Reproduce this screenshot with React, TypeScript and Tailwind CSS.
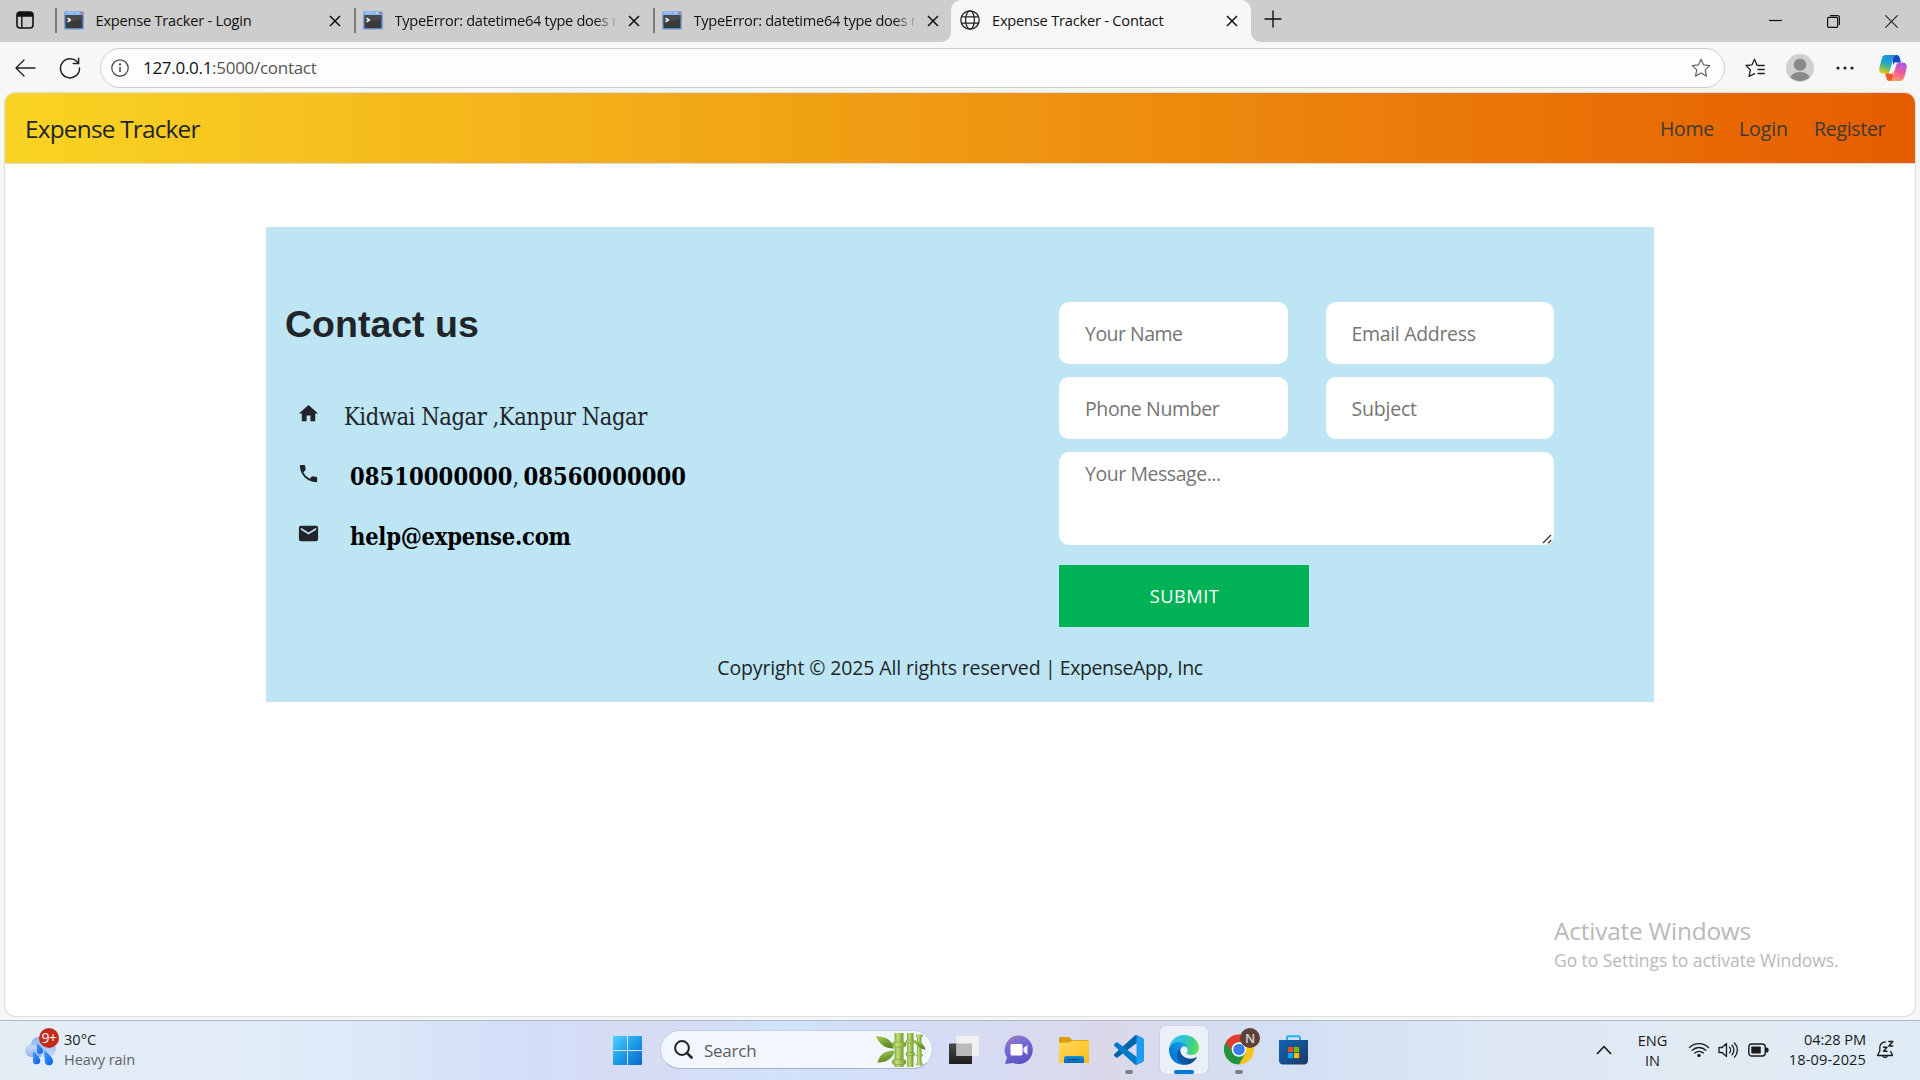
import type { ReactNode } from "react";
import { MdEmail, MdHome, MdPhone } from "react-icons/md";

function ConsoleIcon() {
  return (
    <svg width="20" height="19" viewBox="0 0 20 19" className="shrink-0">
      <rect x="0" y="0.5" width="20" height="18" rx="0.8" fill="#6f9fdf" />
      <rect x="0.5" y="0.5" width="19" height="3.5" fill="#86b4f0" />
      <rect x="3" y="1.5" width="7" height="1" fill="#a9cbf6" />
      <rect x="13.2" y="1.3" width="1.6" height="1.6" fill="#cfe0f7" />
      <rect x="16.6" y="1.1" width="2" height="2" fill="#e2574c" />
      <rect x="1.6" y="4.2" width="16.8" height="13" fill="#3b3b3b" />
      <path d="M1.6 4.2H18.4V8L1.6 12Z" fill="#4a4a4a" />
      <path d="M3.6 7.2L6.2 9L3.6 10.8" fill="none" stroke="#fff" strokeWidth="1.5" />
    </svg>
  );
}

function GlobeIcon() {
  return (
    <svg width="20" height="20" viewBox="0 0 20 20" fill="none" stroke="#222" strokeWidth="1.3" className="shrink-0">
      <circle cx="10" cy="10" r="9.2" />
      <ellipse cx="10" cy="10" rx="4.4" ry="9.2" />
      <path d="M1.6 6.8H18.4M1.6 13.2H18.4" />
    </svg>
  );
}

function CloseIcon() {
  return (
    <svg width="12" height="12" viewBox="0 0 12 12" stroke="#111" strokeWidth="1.5" className="shrink-0">
      <path d="M1 1L11 11M11 1L1 11" />
    </svg>
  );
}

function Tab({ title, fade = false, tracking }: { title: string; fade?: boolean; tracking: string }) {
  return (
    <div className="flex h-[42px] w-[299px] shrink-0 items-center">
      <div className="-mt-px h-[25px] w-[1.5px] bg-[#7a7a7a]" />
      <div className="-mt-0.5 ml-[7px] flex items-center">
        <ConsoleIcon />
        <div
          className={
            "-mt-px ml-[12px] w-[222px] whitespace-nowrap text-[14.6px] leading-5 text-[#111] " +
            tracking +
            (fade ? " [mask-image:linear-gradient(to_right,#000_200px,transparent_224px)]" : "")
          }
        >
          {title}
        </div>
        <div className="ml-[11px] mt-0.5">
          <CloseIcon />
        </div>
      </div>
    </div>
  );
}

function TabStrip() {
  return (
    <div className="flex h-[42px] bg-[#cdcdcd]">
      <div className="flex w-[55px] items-center pl-4">
        <svg width="18" height="18" viewBox="0 0 18 18" className="-mt-0.5">
          <rect x="1" y="1" width="16" height="16" rx="3" fill="none" stroke="#111" strokeWidth="1.6" />
          <path d="M1 4a3 3 0 0 1 3-3h10a3 3 0 0 1 3 3v1.8H1Z" fill="#111" />
          <path d="M5.8 5V17" stroke="#111" strokeWidth="1.4" />
        </svg>
      </div>
      <Tab title="Expense Tracker - Login" tracking="tracking-[-0.22px]" />
      <Tab title="TypeError: datetime64 type does n" fade tracking="tracking-[-0.29px]" />
      <Tab title="TypeError: datetime64 type does n" fade tracking="tracking-[-0.29px]" />
      <div className="relative -ml-px flex w-[300px] shrink-0 items-center rounded-t-[10px] bg-[#f7f7f7] pl-[9px] before:absolute before:bottom-0 before:-left-[10px] before:size-[10px] before:[background-image:radial-gradient(circle_at_0_0,#cdcdcd_9.5px,#f7f7f7_10.5px)] after:absolute after:bottom-0 after:-right-[10px] after:size-[10px] after:[background-image:radial-gradient(circle_at_100%_0,#cdcdcd_9.5px,#f7f7f7_10.5px)]">
        <div className="-mt-0.5 flex items-center">
          <GlobeIcon />
          <div className="-mt-px ml-[12px] w-[222px] whitespace-nowrap text-[14.6px] leading-5 tracking-[-0.2px] text-[#111]">
            Expense Tracker - Contact
          </div>
          <div className="ml-[12px] mt-0.5">
            <CloseIcon />
          </div>
        </div>
      </div>
      <div className="flex flex-1 items-center justify-between pl-[13px] pr-[22px]">
        <svg width="18" height="18" viewBox="0 0 18 18" stroke="#111" strokeWidth="1.4" className="-mt-1">
          <path d="M9 0.5V17.5M0.5 9H17.5" />
        </svg>
        <div className="flex items-center gap-[45px]">
          <svg width="13" height="13" viewBox="0 0 13 13" stroke="#111" strokeWidth="1.2" className="-mt-0.5">
            <path d="M0 6.5H13" />
          </svg>
          <svg width="13" height="13" viewBox="0 0 13 13" fill="none" stroke="#111" strokeWidth="1.2">
            <rect x="0.6" y="2.4" width="10" height="10" rx="1" />
            <path d="M3 0.7H10.4A2 2 0 0 1 12.4 2.7V10" />
          </svg>
          <svg width="13" height="13" viewBox="0 0 13 13" stroke="#222" strokeWidth="1.1">
            <path d="M0.3 0.3L12.7 12.7M12.7 0.3L0.3 12.7" />
          </svg>
        </div>
      </div>
    </div>
  );
}

function CopilotIcon() {
  return (
    <svg width="28" height="26" viewBox="0 0 28 26" className="shrink-0">
      <defs>
        <linearGradient id="cpA" x1="0.6" y1="0" x2="0.3" y2="1">
          <stop offset="0" stopColor="#1b8fe0" />
          <stop offset="0.45" stopColor="#22a5c9" />
          <stop offset="0.75" stopColor="#7fbf5a" />
          <stop offset="1" stopColor="#f3c614" />
        </linearGradient>
        <linearGradient id="cpB" x1="0.6" y1="0" x2="0.3" y2="1">
          <stop offset="0" stopColor="#a45be8" />
          <stop offset="0.5" stopColor="#f0589b" />
          <stop offset="1" stopColor="#ff9d5c" />
        </linearGradient>
      </defs>
      <path d="M14 0H17.5C20 0 20.5 2 21.3 4.8L22 7.5H17C15 7.5 14.5 9 14 10.5Z" fill="#1748c4" />
      <path d="M14 26H10.5C8 26 7.6 24 6.8 21L6 18.3H11C13 18.3 13.5 16.5 14.2 14.5Z" fill="#f0562c" />
      <path d="M7 0H17.5C15.2 0.4 14.6 2.6 13.8 5.5L10.8 16C10.2 18 8.6 18.6 6.8 18.6H4C0.8 18.6 -0.4 16 0.4 12.7L2.5 4.4C3.3 1.4 4.5 0 7 0Z" fill="url(#cpA)" />
      <path d="M21 26H10.5C12.8 25.6 13.4 23.4 14.2 20.5L17.2 10C17.8 8 19.4 7.4 21.2 7.4H24C27.2 7.4 28.4 10 27.6 13.3L25.5 21.6C24.7 24.6 23.5 26 21 26Z" fill="url(#cpB)" />
      <path d="M15.8 7.6H17.3C16.2 8.3 15.9 9.5 15.5 11L13.2 18.9H10C12 18.4 12.4 16.800 12.900 15Z" fill="#fff" />
    </svg>
  );
}

const STAR = "M10 1.2L12.6 6.9L18.8 7.6L14.2 11.9L15.5 18.1L10 15L4.5 18.1L5.8 11.9L1.2 7.6L7.4 6.9Z";

function Toolbar() {
  return (
    <div className="flex h-[51px] items-center bg-[#f7f7f7] pl-[15px] pr-[13px]">
      <svg width="21" height="18" viewBox="0 0 21 18" fill="none" stroke="#222" strokeWidth="1.4" strokeLinecap="round" strokeLinejoin="round">
        <path d="M20 9H1M9 1L1 9L9 17" />
      </svg>
      <svg width="22" height="22" viewBox="0 0 22 22" fill="none" stroke="#222" strokeWidth="1.5" strokeLinecap="round" className="ml-[23px]">
        <path d="M19 6.2A9.5 9.5 0 1 0 20.5 11" />
        <path d="M19.6 1.2V6.5H14.3" />
      </svg>
      <div className="ml-[19px] flex h-10 w-[1625px] items-center rounded-full border border-[#cfcfcf] bg-[#fdfdfd] pl-[10px] pr-[13px]">
        <svg width="18" height="18" viewBox="0 0 18 18" fill="none" stroke="#444" strokeWidth="1.2">
          <circle cx="9" cy="9" r="8.2" />
          <path d="M9 8V13" strokeWidth="1.5" />
          <circle cx="9" cy="5.4" r="0.5" fill="#444" />
        </svg>
        <div className="ml-[14px] flex-1 text-[17px] leading-6 tracking-[-0.29px] text-[#555]">
          <span className="text-[#111]">127.0.0.1</span>:5000/contact
        </div>
        <svg width="20" height="20" viewBox="0 0 20 20" fill="none" stroke="#6a6a6a" strokeWidth="1.3" strokeLinejoin="round">
          <path d={STAR} />
        </svg>
      </div>
      <svg width="20" height="20" viewBox="0 0 20 20" fill="none" stroke="#222" strokeWidth="1.3" strokeLinejoin="round" strokeLinecap="round" className="ml-[20px]">
        <path d="M11.5 7H12L9.5 1.2L7 6.8L1 7.5L5.4 11.9L4 18.3L9.5 15.6M13 7.5H19.3M13 11.5H19.3M13 15.5H19.3" />
      </svg>
      <svg width="28" height="28" viewBox="0 0 28 28" className="ml-[21px]">
        <defs>
          <clipPath id="av">
            <circle cx="14" cy="14" r="13" />
          </clipPath>
        </defs>
        <circle cx="14" cy="14" r="14" fill="#d2d0ce" />
        <circle cx="14" cy="10.6" r="6.2" fill="#8a8886" />
        <ellipse cx="14" cy="25.5" rx="10.5" ry="7.6" fill="#8a8886" clipPath="url(#av)" />
      </svg>
      <svg width="18" height="4" viewBox="0 0 18 4" fill="#222" className="ml-[22px]">
        <circle cx="2" cy="2" r="1.6" />
        <circle cx="9" cy="2" r="1.6" />
        <circle cx="16" cy="2" r="1.6" />
      </svg>
      <div className="ml-auto">
        <CopilotIcon />
      </div>
    </div>
  );
}

const field =
  "block w-full rounded-[10px] bg-white px-[26px] text-[19.5px] text-[#212529] outline-none placeholder:text-[#757575] placeholder:opacity-100 ";

function ContactForm() {
  return (
    <form className="w-[495px]">
      <div className="grid grid-cols-2 gap-x-[38px] gap-y-[13px]">
        <input className={field + "h-[62px] tracking-[-0.52px]"} placeholder="Your Name" />
        <input className={field + "h-[62px] tracking-[-0.32px]"} placeholder="Email Address" />
        <input className={field + "h-[62px] tracking-[-0.38px]"} placeholder="Phone Number" />
        <input className={field + "h-[62px] tracking-[-0.2px]"} placeholder="Subject" />
      </div>
      <div className="relative mt-[13px]">
        <textarea
          className={field + "h-[93px] resize-none pt-[7px] leading-[30px] tracking-[-0.45px]"}
          placeholder="Your Message..."
        />
        <svg width="10" height="10" viewBox="0 0 10 10" stroke="#444" strokeWidth="1.5" className="absolute bottom-px right-0.5">
          <path d="M1 9L9 1M6 9.200L9.200 6" />
        </svg>
      </div>
      <button type="button" className="mt-5 block h-[62px] w-[250px] bg-[#00b156] pl-px text-[18.3px] tracking-[0.45px] text-white">
        SUBMIT
      </button>
    </form>
  );
}

function ContactRow({ icon, children }: { icon: ReactNode; children: ReactNode }) {
  return (
    <div className="flex h-[60px] items-start pl-[12px] text-[#212529]">
      <div className="w-[47px]">{icon}</div>
      <div className="-mt-px whitespace-nowrap font-['DejaVu_Serif_Condensed','DejaVu_Serif',serif] text-[23.5px] leading-[32px]">
        {children}
      </div>
    </div>
  );
}

function Page() {
  return (
    <div className="flex h-[927px] flex-col bg-[#f7f7f7] px-[5px] pb-[4px]">
      <div className="flex-1 overflow-hidden rounded-[10px] bg-white shadow-[0_0_2px_rgba(0,0,0,0.35)]">
        <nav className="flex h-[70px] items-center justify-between pl-5 pr-[30px] pt-0.5 [background-image:linear-gradient(to_right,#f9d423,#e65c00)]">
          <div className="text-[24.4px] tracking-[-0.8px] text-[#212529]">Expense Tracker</div>
          <div className="flex text-[19.5px] text-[#3d3a31]">
            <span className="w-[79px] tracking-[-0.3px]">Home</span>
            <span className="w-[75px] tracking-[-0.1px]">Login</span>
            <span className="w-[71px] tracking-[-0.3px]">Register</span>
          </div>
        </nav>
        <div className="h-px bg-[#dcdcdc]" />
        <section className="mx-auto mt-[63px] h-[475px] w-[1388px] bg-[#bde5f3]">
          <div className="flex h-[400px] pt-[75px]">
            <div className="w-[793px] pl-[19px]">
              <h1 className="font-['Liberation_Sans',Arial,sans-serif] text-[37.5px] font-bold leading-[44px] text-[#212529]">
                Contact us
              </h1>
              <div className="mt-[56px]">
                <ContactRow icon={<MdHome size={23} />}>
                  <span className="tracking-[-0.44px]">Kidwai Nagar ,Kanpur Nagar</span>
                </ContactRow>
                <ContactRow icon={<MdPhone size={23} />}>
                  <span className="ml-[6px]">
                    <b className="tracking-[0.06px] text-black">08510000000</b>
                    <span className="tracking-[-1.2px]">, </span>
                    <b className="tracking-[0.06px] text-black">08560000000</b>
                  </span>
                </ContactRow>
                <ContactRow icon={<MdEmail size={23} />}>
                  <b className="ml-[6px] tracking-[-0.24px] text-black">help@expense.com</b>
                </ContactRow>
              </div>
            </div>
            <ContactForm />
          </div>
          <p className="pt-[26px] text-center text-[19.5px] leading-[30px] tracking-[-0.28px] text-[#212529]">
            <span className="tracking-[-0.13px]">Copyright © 2025 All rights reserved</span>
            <span className="tracking-[-0.5px]"> | </span>
            <span className="tracking-[-0.42px]">ExpenseApp, Inc</span>
          </p>
        </section>
      </div>
    </div>
  );
}

function WeatherIcon() {
  return (
    <svg width="36" height="38" viewBox="0 0 36 38" className="shrink-0">
      <defs>
        <linearGradient id="wc" x1="0" y1="0" x2="0" y2="1">
          <stop offset="0" stopColor="#8fb4f2" />
          <stop offset="1" stopColor="#c9dafa" />
        </linearGradient>
        <linearGradient id="wl" x1="0" y1="0" x2="0" y2="1">
          <stop offset="0" stopColor="#cddcf6" />
          <stop offset="1" stopColor="#94b0ea" />
        </linearGradient>
        <linearGradient id="wd" x1="0" y1="0" x2="1" y2="1">
          <stop offset="0" stopColor="#3fa0ff" />
          <stop offset="1" stopColor="#0a5fe8" />
        </linearGradient>
      </defs>
      <path d="M6.500 29A6.500 6.500 0 0 1 5.800 16.200A8.500 8.500 0 0 1 21.800 13.500A7 7 0 0 1 24.500 29Z" fill="url(#wc)" />
      <path d="M0 22.500A5.500 5.500 0 0 1 8 17.800A7 7 0 0 1 16 24.500V29H6.500A6.500 6.500 0 0 1 0 22.500Z" fill="url(#wl)" />
      <path d="M12 15.500C15 18 18 20.500 18 22.800A3.100 3.100 0 0 1 11.800 23Z" fill="url(#wd)" />
      <path d="M8 23C12 26.500 15.200 30 15.200 32.500A3.600 3.600 0 0 1 8 33Z" fill="url(#wd)" />
      <path d="M19 22C24 26 28 30 28 33A4 4 0 0 1 19.900 33.500Z" fill="url(#wd)" />
      <circle cx="24" cy="10" r="10" fill="#c42b1c" />
      <text x="24" y="15" textAnchor="middle" fontSize="14" fill="#fff" fontFamily="Open Sans, sans-serif" letterSpacing="-0.6">
        9+
      </text>
    </svg>
  );
}

function WindowsIcon() {
  return (
    <svg width="29" height="29" viewBox="0 0 29 29">
      <defs>
        <linearGradient id="wi" gradientUnits="userSpaceOnUse" x1="0" y1="0" x2="29" y2="29">
          <stop offset="0" stopColor="#50d3fc" />
          <stop offset="0.5" stopColor="#1c9be6" />
          <stop offset="1" stopColor="#0669cf" />
        </linearGradient>
      </defs>
      <path d="M1 0H14V14H0V1A1 1 0 0 1 1 0ZM15 0H28A1 1 0 0 1 29 1V14H15ZM0 15H14V29H1A1 1 0 0 1 0 28ZM15 15H29V28A1 1 0 0 1 28 29H15Z" fill="url(#wi)" />
    </svg>
  );
}

function BambooIcon() {
  return (
    <svg width="50" height="34" viewBox="0 0 50 34">
      <defs>
        <linearGradient id="bm" x1="0" y1="0" x2="1" y2="0">
          <stop offset="0" stopColor="#7fa838" />
          <stop offset="0.35" stopColor="#c2df78" />
          <stop offset="1" stopColor="#6f9a2e" />
        </linearGradient>
        <linearGradient id="bl" x1="0" y1="0" x2="0.4" y2="1">
          <stop offset="0" stopColor="#a9cf58" />
          <stop offset="1" stopColor="#5b8623" />
        </linearGradient>
      </defs>
      <path d="M0 3C7 3.500 16 5 17.500 15.500C9 15.500 3 11 0 3Z" fill="url(#bl)" />
      <path d="M1.500 29.500C4 20 11 17 18.500 18C17 26 9 30 1.500 29.500Z" fill="url(#bl)" />
      <rect x="18.500" y="0" width="9" height="34" fill="url(#bm)" />
      <rect x="16" y="9" width="14" height="5" rx="2.500" fill="url(#bm)" stroke="#6f9a2e" strokeWidth="0.500" />
      <rect x="16" y="26.500" width="14" height="5" rx="2.500" fill="url(#bm)" stroke="#6f9a2e" strokeWidth="0.500" />
      <rect x="31" y="0" width="6.500" height="34" fill="url(#bm)" />
      <rect x="29.800" y="7" width="9" height="3.200" rx="1.600" fill="url(#bm)" stroke="#6f9a2e" strokeWidth="0.500" />
      <rect x="29.800" y="19.500" width="9" height="3.200" rx="1.600" fill="url(#bm)" stroke="#6f9a2e" strokeWidth="0.500" />
      <rect x="41" y="2" width="4.500" height="30" fill="url(#bm)" />
      <rect x="39.800" y="1.500" width="7" height="2.600" rx="1.300" fill="url(#bm)" />
      <rect x="39.800" y="21" width="7" height="2.600" rx="1.300" fill="url(#bm)" />
      <rect x="39.800" y="30" width="7" height="2.600" rx="1.300" fill="url(#bm)" />
      <path d="M37.500 7C43 7.500 48.500 11 49.500 17C44 15.500 39 12 37.500 7Z" fill="url(#bl)" />
    </svg>
  );
}

function TaskViewIcon() {
  return (
    <svg width="30" height="30" viewBox="0 0 30 30">
      <defs>
        <linearGradient id="tv" x1="0" y1="0" x2="0" y2="1">
          <stop offset="0" stopColor="#4a4a4a" />
          <stop offset="1" stopColor="#1c1c1c" />
        </linearGradient>
      </defs>
      <rect x="0" y="8.500" width="23" height="20.500" rx="0.800" fill="url(#tv)" />
      <rect x="7.500" y="1" width="22.500" height="20" rx="0.800" fill="#f1f1f1" />
      <rect x="7.500" y="8.500" width="15.500" height="12.500" fill="#bbb" />
    </svg>
  );
}

function ChatIcon() {
  return (
    <svg width="30" height="30" viewBox="0 0 30 30">
      <defs>
        <linearGradient id="ch" x1="0.200" y1="0" x2="0.700" y2="1">
          <stop offset="0" stopColor="#a878b8" />
          <stop offset="0.300" stopColor="#7a6fd4" />
          <stop offset="1" stopColor="#5550c0" />
        </linearGradient>
      </defs>
      <path d="M15 0.500A14.300 14.300 0 1 1 9 28L1 29L3 22.600A14.300 14.300 0 0 1 15 0.500Z" fill="url(#ch)" />
      <rect x="6.500" y="9" width="12" height="11.500" rx="1.600" fill="#fff" />
      <path d="M19.500 13L23.500 10V20L19.500 16.800Z" fill="#f0eefe" />
    </svg>
  );
}

function FolderIcon() {
  return (
    <svg width="30" height="28" viewBox="0 0 30 28">
      <defs>
        <linearGradient id="fo" x1="0" y1="0" x2="1" y2="1">
          <stop offset="0" stopColor="#ffd95c" />
          <stop offset="1" stopColor="#fbbc1e" />
        </linearGradient>
        <linearGradient id="fb" x1="0" y1="0" x2="0" y2="1">
          <stop offset="0" stopColor="#1490df" />
          <stop offset="1" stopColor="#0668b6" />
        </linearGradient>
      </defs>
      <path d="M0 2.400A1.600 1.600 0 0 1 1.600 1H10L13 4H28.500A1.500 1.500 0 0 1 30 5.500V10H0Z" fill="#dc9a05" />
      <path d="M0 6.500H10.500L13 4.800H30V27H0Z" fill="url(#fo)" />
      <path d="M5 27V22.300A2.300 2.300 0 0 1 7.300 20H22.700A2.300 2.300 0 0 1 25 22.300V27Z" fill="url(#fb)" />
      <path d="M8.500 23.500H21.500" stroke="#0a4f92" strokeWidth="1.200" />
    </svg>
  );
}

function VSCodeIcon() {
  return (
    <svg width="30" height="30" viewBox="0 0 100 100">
      <path d="M96.5 10.8L75.9.9a6.2 6.2 0 0 0-7.1 1.2L1.3 63.6a4.2 4.2 0 0 0 0 6.2l5.5 5a4.2 4.2 0 0 0 5.3.2L93.4 13.4c2.7-2.1 6.6-.1 6.6 3.3v-.2a6.3 6.3 0 0 0-3.5-5.7Z" fill="#0065a9" />
      <path d="M96.5 89.2L75.9 99.1a6.2 6.2 0 0 1-7.1-1.2L1.3 36.4a4.2 4.2 0 0 1 0-6.2l5.5-5a4.2 4.2 0 0 1 5.3-.2l81.3 61.6c2.7 2.1 6.6.1 6.6-3.3v.2a6.3 6.3 0 0 1-3.5 5.7Z" fill="#007acc" />
      <path d="M75.9 99.1a6.2 6.2 0 0 1-7.1-1.2c2.3 2.3 6.2.7 6.2-2.6V4.7c0-3.3-3.9-4.9-6.2-2.6a6.2 6.2 0 0 1 7.1-1.2l20.6 9.900a6.300 6.300 0 0 1 3.500 5.600v67.200a6.300 6.300 0 0 1-3.500 5.600Z" fill="#1f9cf0" />
    </svg>
  );
}

function EdgeIcon() {
  return (
    <svg width="30" height="30" viewBox="0 0 256 256">
      <defs>
        <linearGradient id="e1" x1="0.25" y1="0.7" x2="0.95" y2="0.7">
          <stop offset="0" stopColor="#0c59a4" />
          <stop offset="1" stopColor="#114a8b" />
        </linearGradient>
        <linearGradient id="e2" x1="0.9" y1="0.3" x2="0.3" y2="0.95">
          <stop offset="0" stopColor="#1b9de2" />
          <stop offset="0.2" stopColor="#1595df" />
          <stop offset="0.7" stopColor="#0680d7" />
          <stop offset="1" stopColor="#0078d4" />
        </linearGradient>
        <linearGradient id="e3" x1="0" y1="0.4" x2="1" y2="0.6">
          <stop offset="0" stopColor="#35c1f1" />
          <stop offset="0.4" stopColor="#2cc3dc" />
          <stop offset="0.75" stopColor="#3fd089" />
          <stop offset="1" stopColor="#66e354" />
        </linearGradient>
      </defs>
      <path d="M231 190.5c-3.4 1.8-6.9 3.4-10.5 4.7a101.5 101.5 0 0 1-35.9 6.5c-47.3 0-88.5-32.5-88.5-74.3a31.5 31.5 0 0 1 16.4-27.3c-42.8 1.8-53.8 46.4-53.8 72.5 0 73.9 68.1 81.4 82.8 81.4 7.9 0 19.8-2.3 27-4.6l1.3-.4a128.3 128.3 0 0 0 66.6-52.8 4 4 0 0 0-5.4-5.7Z" fill="url(#e1)" />
      <path d="M105.7 241.4a79.2 79.2 0 0 1-22.7-21.3 80.7 80.7 0 0 1 29.5-120c3.2-1.5 8.5-4.1 15.6-4a32.4 32.4 0 0 1 25.7 13 31.9 31.9 0 0 1 6.3 18.7c0-.2 24.5-79.6-80-79.6-43.900 0-80 41.700-80 78.200a130.200 130.200 0 0 0 12.100 56 128 128 0 0 0 156.400 67.100 75.500 75.500 0 0 1-62.800-8Z" fill="url(#e2)" />
      <path d="M152.300 148.900c-.9 1-3.400 2.500-3.400 5.600 0 2.600 1.700 5.200 4.800 7.300 14.300 10 41.400 8.600 41.500 8.600a59.600 59.600 0 0 0 30.300-8.300 61.400 61.400 0 0 0 30.400-52.900c.3-22.400-8-37.300-11.300-43.900C223.500 23.900 177.700 0 128 0A128 128 0 0 0 0 126.200c.5-36.500 36.800-66 80-66 3.500 0 23.500.3 42 10.100 16.300 8.600 24.900 18.900 30.800 29.200 6.200 10.700 7.300 24.100 7.300 29.500 0 5.300-2.700 13.300-7.800 19.900Z" fill="url(#e3)" />
    </svg>
  );
}

function ChromeIcon() {
  return (
    <svg width="38" height="38" viewBox="0 0 38 38">
      <g transform="translate(0 6.5)">
        <circle cx="15" cy="15" r="15" fill="#fbc116" />
        <path d="M2 7.5A15 15 0 0 0 15 30L21.500 18.700L15 15V7.500Z" fill="#229342" />
        <path d="M2 7.500A15 15 0 0 1 28 7.500H15A7.500 7.500 0 0 0 8.500 18.800Z" fill="#e33b2e" />
        <circle cx="15" cy="15" r="7.300" fill="#fff" />
        <circle cx="15" cy="15" r="5.800" fill="#3b7ded" />
      </g>
      <circle cx="26" cy="10" r="10" fill="#5d4037" />
      <text x="26" y="15" textAnchor="middle" fontSize="13" fontWeight="600" fill="#ddd5d2" fontFamily="Open Sans, sans-serif">
        N
      </text>
    </svg>
  );
}

function StoreIcon() {
  return (
    <svg width="29" height="30" viewBox="0 0 29 30">
      <defs>
        <linearGradient id="st" x1="0" y1="0" x2="1" y2="1">
          <stop offset="0" stopColor="#0f65b5" />
          <stop offset="1" stopColor="#1d3a66" />
        </linearGradient>
      </defs>
      <path d="M8 7V2.5A1.2 1.2 0 0 1 9.2 1.3H19.8A1.2 1.2 0 0 1 21 2.5V7" fill="none" stroke="#21b5ee" strokeWidth="2" />
      <path d="M0 5H29V25A4 4 0 0 1 25 29.5H4A4 4 0 0 1 0 25Z" fill="url(#st)" />
      <rect x="9" y="12" width="5.2" height="5.2" fill="#f25022" />
      <rect x="15" y="12" width="5.2" height="5.2" fill="#7fba00" />
      <rect x="9" y="18" width="5.2" height="5.2" fill="#00a4ef" />
      <rect x="15" y="18" width="5.2" height="5.2" fill="#ffb900" />
    </svg>
  );
}

function AppSlot({ children, state }: { children: ReactNode; state?: "running" | "active" }) {
  return (
    <div
      className={
        "relative flex size-12 items-center justify-center rounded-[5px] " +
        (state === "active" ? "bg-[#ebeff9] shadow-[0_0_1px_rgba(80,90,120,0.5)]" : "")
      }
    >
      {children}
      {state === "running" && <span className="absolute bottom-0 h-1 w-2 rounded-full bg-[#7d8088]" />}
      {state === "active" && <span className="absolute bottom-0 h-1 w-5 rounded-full bg-[#0078d4]" />}
    </div>
  );
}

function Taskbar() {
  return (
    <div className="flex h-[60px] border-t border-[#b0b6c4] text-[#1b1b1b] [background-image:linear-gradient(to_right,#e3edf6_0px,#dfebf8_330px,#d2dff7_500px,#d6dcf4_650px,#d0e2fa_780px,#d6dcf4_960px,#dad9ea_1110px,#d3e0f4_1300px,#dee8f4_1520px,#e1ebf4_1700px,#deebf5_1920px)]">
      <div className="flex w-[613px] pl-[25px] pt-[7px]">
        <WeatherIcon />
        <div className="ml-[3px] pt-px text-[14.6px] leading-5">
          <div>30°C</div>
          <div className="tracking-[-0.12px] text-[#5f6368]">Heavy rain</div>
        </div>
      </div>
      <div className="pt-[15px]">
        <WindowsIcon />
      </div>
      <div className="ml-[18px] mt-[9px] flex h-[39px] w-[273px] items-center rounded-full border border-b-[#a9b2c8] border-[#c6d0e6] bg-[#f2f6fd] pl-[13px]">
        <svg width="19" height="19" viewBox="0 0 19 19" fill="none" stroke="#222" strokeWidth="2">
          <circle cx="8" cy="8" r="6.9" />
          <path d="M12.8 12.8L17.5 17.5" strokeWidth="2.6" strokeLinecap="round" />
        </svg>
        <div className="ml-[11px] mt-0.5 text-[17px] leading-6 tracking-[-0.25px] text-[#5b5e64]">Search</div>
        <div className="ml-auto mr-[6px]">
          <BambooIcon />
        </div>
      </div>
      <div className="ml-[7px] flex gap-[7px] pt-[5px]">
        <AppSlot><TaskViewIcon /></AppSlot>
        <AppSlot><ChatIcon /></AppSlot>
        <AppSlot><FolderIcon /></AppSlot>
        <AppSlot state="running"><VSCodeIcon /></AppSlot>
        <AppSlot state="active"><EdgeIcon /></AppSlot>
        <AppSlot state="running">
          <div className="-mt-[6px] ml-[8px]"><ChromeIcon /></div>
        </AppSlot>
        <AppSlot>
          <div className="mr-px"><StoreIcon /></div>
        </AppSlot>
      </div>
      <div className="ml-auto flex pr-[24px] text-[14.6px] leading-5">
        <svg width="16" height="10" viewBox="0 0 16 10" fill="none" stroke="#1b1b1b" strokeWidth="1.7" strokeLinecap="round" strokeLinejoin="round" className="mt-[24px]">
          <path d="M1.5 8.5L8 1.5L14.5 8.5" />
        </svg>
        <div className="ml-[17px] w-[47px] pt-[9px] text-center">
          <div>ENG</div>
          <div>IN</div>
        </div>
        <svg width="22" height="18" viewBox="0 0 22 18" fill="none" stroke="#1b1b1b" strokeWidth="1.3" strokeLinecap="round" className="ml-[12px] mt-[20px]">
          <path d="M1.5 6.5A13.5 13.5 0 0 1 20.5 6.5M4.2 9.3A9.6 9.6 0 0 1 17.8 9.3M6.8 12A6 6 0 0 1 15.2 12" />
          <circle cx="11" cy="14.5" r="1.7" fill="#1b1b1b" stroke="none" />
        </svg>
        <svg width="22" height="18" viewBox="0 0 22 18" fill="none" stroke="#1b1b1b" strokeWidth="1.3" strokeLinecap="round" strokeLinejoin="round" className="ml-[8px] mt-[20px]">
          <path d="M1 6.5H4.2L8.5 2.5V15.5L4.2 11.5H1Z" />
          <path d="M11.5 6.2A4 4 0 0 1 11.5 11.8M14 4.2A7 7 0 0 1 14 13.8M16.5 2A10 10 0 0 1 16.500 16" />
        </svg>
        <svg width="21" height="14" viewBox="0 0 21 14" fill="none" stroke="#1b1b1b" strokeWidth="1.4" className="ml-[8px] mt-[22px]">
          <rect x="0.8" y="1" width="16.4" height="12" rx="2.8" />
          <rect x="3.3" y="3.4" width="9.5" height="7.2" rx="0.8" fill="#1b1b1b" stroke="none" />
          <path d="M18.2 5.2H18.8A1.2 1.8 0 0 1 18.8 8.8H18.2Z" fill="#1b1b1b" />
        </svg>
        <div className="ml-[18px] w-[79px] pt-2 text-right">
          <div className="tracking-[-0.1px]">04:28 PM</div>
          <div className="tracking-[0.1px]">18-09-2025</div>
        </div>
        <svg width="20" height="20" viewBox="0 0 20 20" fill="none" stroke="#1b1b1b" strokeWidth="1.3" strokeLinejoin="round" strokeLinecap="round" className="ml-[10px] mt-[19px]">
          <path d="M9.5 1.8C6 1.8 3.8 4.5 3.8 7.5V11L1.5 15.5H16.5L14.8 11.5" />
          <path d="M6.5 15.8A2.7 2.7 0 0 0 11.5 15.8" />
          <path d="M7.5 7.3H11L7.5 11.3H11M12.8 1.5H16.8L12.8 6H16.8" strokeWidth="1.4" />
        </svg>
      </div>
    </div>
  );
}

export default function App() {
  return (
    <div className="relative h-[1080px] w-[1920px] overflow-hidden bg-[#f7f7f7] font-['Open_Sans','Noto_Sans',sans-serif]">
      <TabStrip />
      <Toolbar />
      <Page />
      <Taskbar />
      <div className="absolute left-[1554px] top-[914px] text-[#b9b9b9]">
        <div className="text-[24.4px] leading-[34px] tracking-[-0.2px]">Activate Windows</div>
        <div className="text-[17.5px] leading-6 tracking-[-0.06px]">Go to Settings to activate Windows.</div>
      </div>
    </div>
  );
}
